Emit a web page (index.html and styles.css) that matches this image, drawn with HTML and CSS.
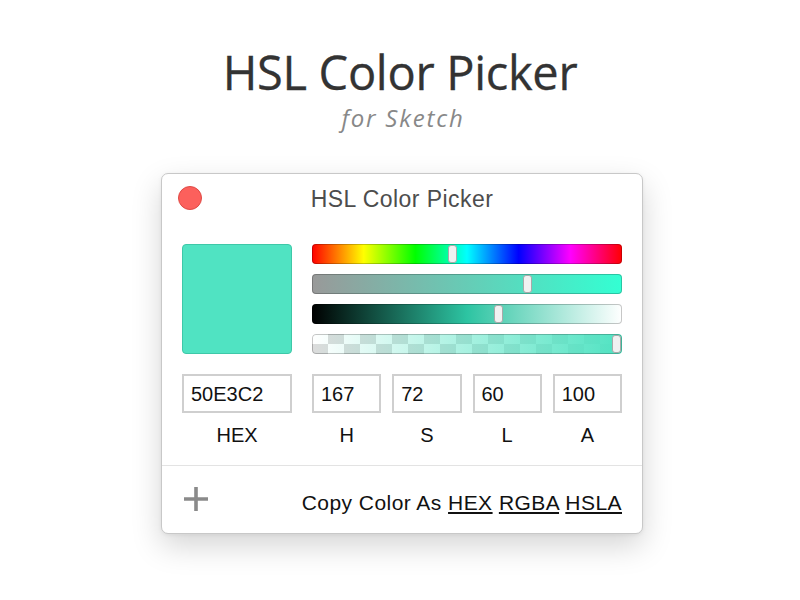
FILE: index.html
```html
<!DOCTYPE html>
<html>
<head>
<meta charset="utf-8">
<link rel="stylesheet" href="styles.css">
</head>
<body>
<div class="page">
  <h1 class="title">HSL Color Picker</h1>
  <p class="subtitle">for Sketch</p>
  <div class="window">
    <div class="titlebar">
      <span class="close"></span>
      <span class="wtitle">HSL Color Picker</span>
      <span></span>
    </div>
    <div class="body">
      <div class="top">
        <div class="swatch"></div>
        <div class="sliders">
          <div class="slider hue"><span class="thumb" style="left:136px"></span></div>
          <div class="slider sat"><span class="thumb" style="left:211px"></span></div>
          <div class="slider light"><span class="thumb" style="left:182px"></span></div>
          <div class="slider alpha"><span class="thumb" style="left:300px"></span></div>
        </div>
      </div>
      <div class="fields">
        <div class="field">
          <div class="box">50E3C2</div>
          <div class="label">HEX</div>
        </div>
        <div class="hsla">
          <div class="field"><div class="box">167</div><div class="label">H</div></div>
          <div class="field"><div class="box">72</div><div class="label">S</div></div>
          <div class="field"><div class="box">60</div><div class="label">L</div></div>
          <div class="field"><div class="box">100</div><div class="label">A</div></div>
        </div>
      </div>
    </div>
    <div class="footer">
      <svg class="plus" width="24" height="24" viewBox="0 0 24 24"><path d="M12 0V24M0 12H24" stroke="#8a8a8a" stroke-width="3.6" fill="none"/></svg>
      <p class="copy">Copy Color As <a href="#">HEX</a> <a href="#">RGBA</a> <a href="#">HSLA</a></p>
    </div>
  </div>
</div>
</body>
</html>
```
FILE: styles.css
```css
* { box-sizing: border-box; }
html, body { margin: 0; padding: 0; background: #fff; }
.page {
  width: 800px;
  height: 600px;
  padding-top: 44px;
  overflow: hidden;
}
.title {
  margin: 0;
  text-align: center;
  font-family: "Open Sans", sans-serif;
  font-weight: 400;
  font-size: 47px;
  line-height: 56px;
  letter-spacing: -0.3px;
  color: #333;
  -webkit-text-stroke: 0.3px #333;
}
.subtitle {
  margin: 3px 0 0;
  text-align: center;
  font-family: "Open Sans", sans-serif;
  font-style: italic;
  font-size: 24px;
  line-height: 30px;
  letter-spacing: 1.8px;
  color: #888;
  padding-left: 6px;
}
.window {
  margin: 40px 0 0 161px;
  width: 482px;
  background: #fff;
  border: 1px solid #c8c8c8;
  border-radius: 7px;
  box-shadow: 0 12px 30px rgba(0,0,0,0.17), 0 1px 4px rgba(0,0,0,0.06);
  font-family: "Liberation Sans", Arial, sans-serif;
  color: #111;
}
.titlebar {
  height: 48px;
  display: grid;
  grid-template-columns: 1fr auto 1fr;
  align-items: center;
  padding: 0 16px;
}
.close {
  width: 24px;
  height: 24px;
  border-radius: 50%;
  background: #fc605c;
  border: 1px solid #df4a45;
}
.wtitle {
  font-size: 23px;
  line-height: 46px;
  padding-top: 2px;
  letter-spacing: 0.45px;
  color: #4d4d4d;
}
.body {
  padding: 22px 20px 18px;
  border-bottom: 1px solid #e3e3e3;
}
.top {
  display: flex;
  gap: 20px;
}
.swatch {
  width: 110px;
  height: 110px;
  background: #50e3c2;
  border: 1px solid #3ec8a8;
  border-radius: 4px;
}
.sliders {
  width: 310px;
  display: flex;
  flex-direction: column;
  gap: 10px;
}
.slider {
  position: relative;
  height: 20px;
  border-radius: 4px;
  box-shadow: inset 0 0 0 1px rgba(0,0,0,0.22);
}
.hue {
  background: linear-gradient(to right, #f00 0%, #ff0 16.66%, #0f0 33.33%, #0ff 50%, #00f 66.66%, #f0f 83.33%, #f00 100%);
}
.sat {
  background: linear-gradient(to right, hsl(167,0%,60%), hsl(167,100%,60%));
}
.light {
  background: linear-gradient(to right, #000, #2dc4a2 50%, #fff);
}
.alpha {
  background:
    linear-gradient(to right, rgba(80,227,194,0), #50e3c2),
    conic-gradient(#dcdcdc 0 25%, #fff 0 50%, #dcdcdc 0 75%, #fff 0) 0 0 / 32px 20px;
}
.thumb {
  position: absolute;
  top: 1px;
  width: 9px;
  height: 18px;
  background: #f1f1f1;
  border: 1px solid #a9a9a9;
  border-radius: 3px;
}
.fields {
  margin-top: 20px;
  display: grid;
  grid-template-columns: 110px 310px;
  gap: 20px;
}
.hsla {
  display: grid;
  grid-template-columns: repeat(4, 1fr);
  gap: 11px;
}
.box {
  height: 39px;
  border: 2px solid #cfcfcf;
  padding: 2px 7px 0;
  font-size: 20px;
  line-height: 33px;
  color: #111;
}
.label {
  margin-top: 10px;
  text-align: center;
  font-size: 20px;
  line-height: 24px;
  color: #111;
}
.footer {
  height: 67px;
  display: flex;
  justify-content: space-between;
  align-items: flex-start;
  padding: 21px 20px 0 22px;
}
.plus { display: block; }
.copy {
  margin: 0;
  padding-top: 4px;
  font-size: 21px;
  line-height: 24px;
  letter-spacing: 0.45px;
  color: #111;
}
.copy a {
  color: #111;
  text-decoration: underline;
  text-underline-offset: 2px;
}
```
